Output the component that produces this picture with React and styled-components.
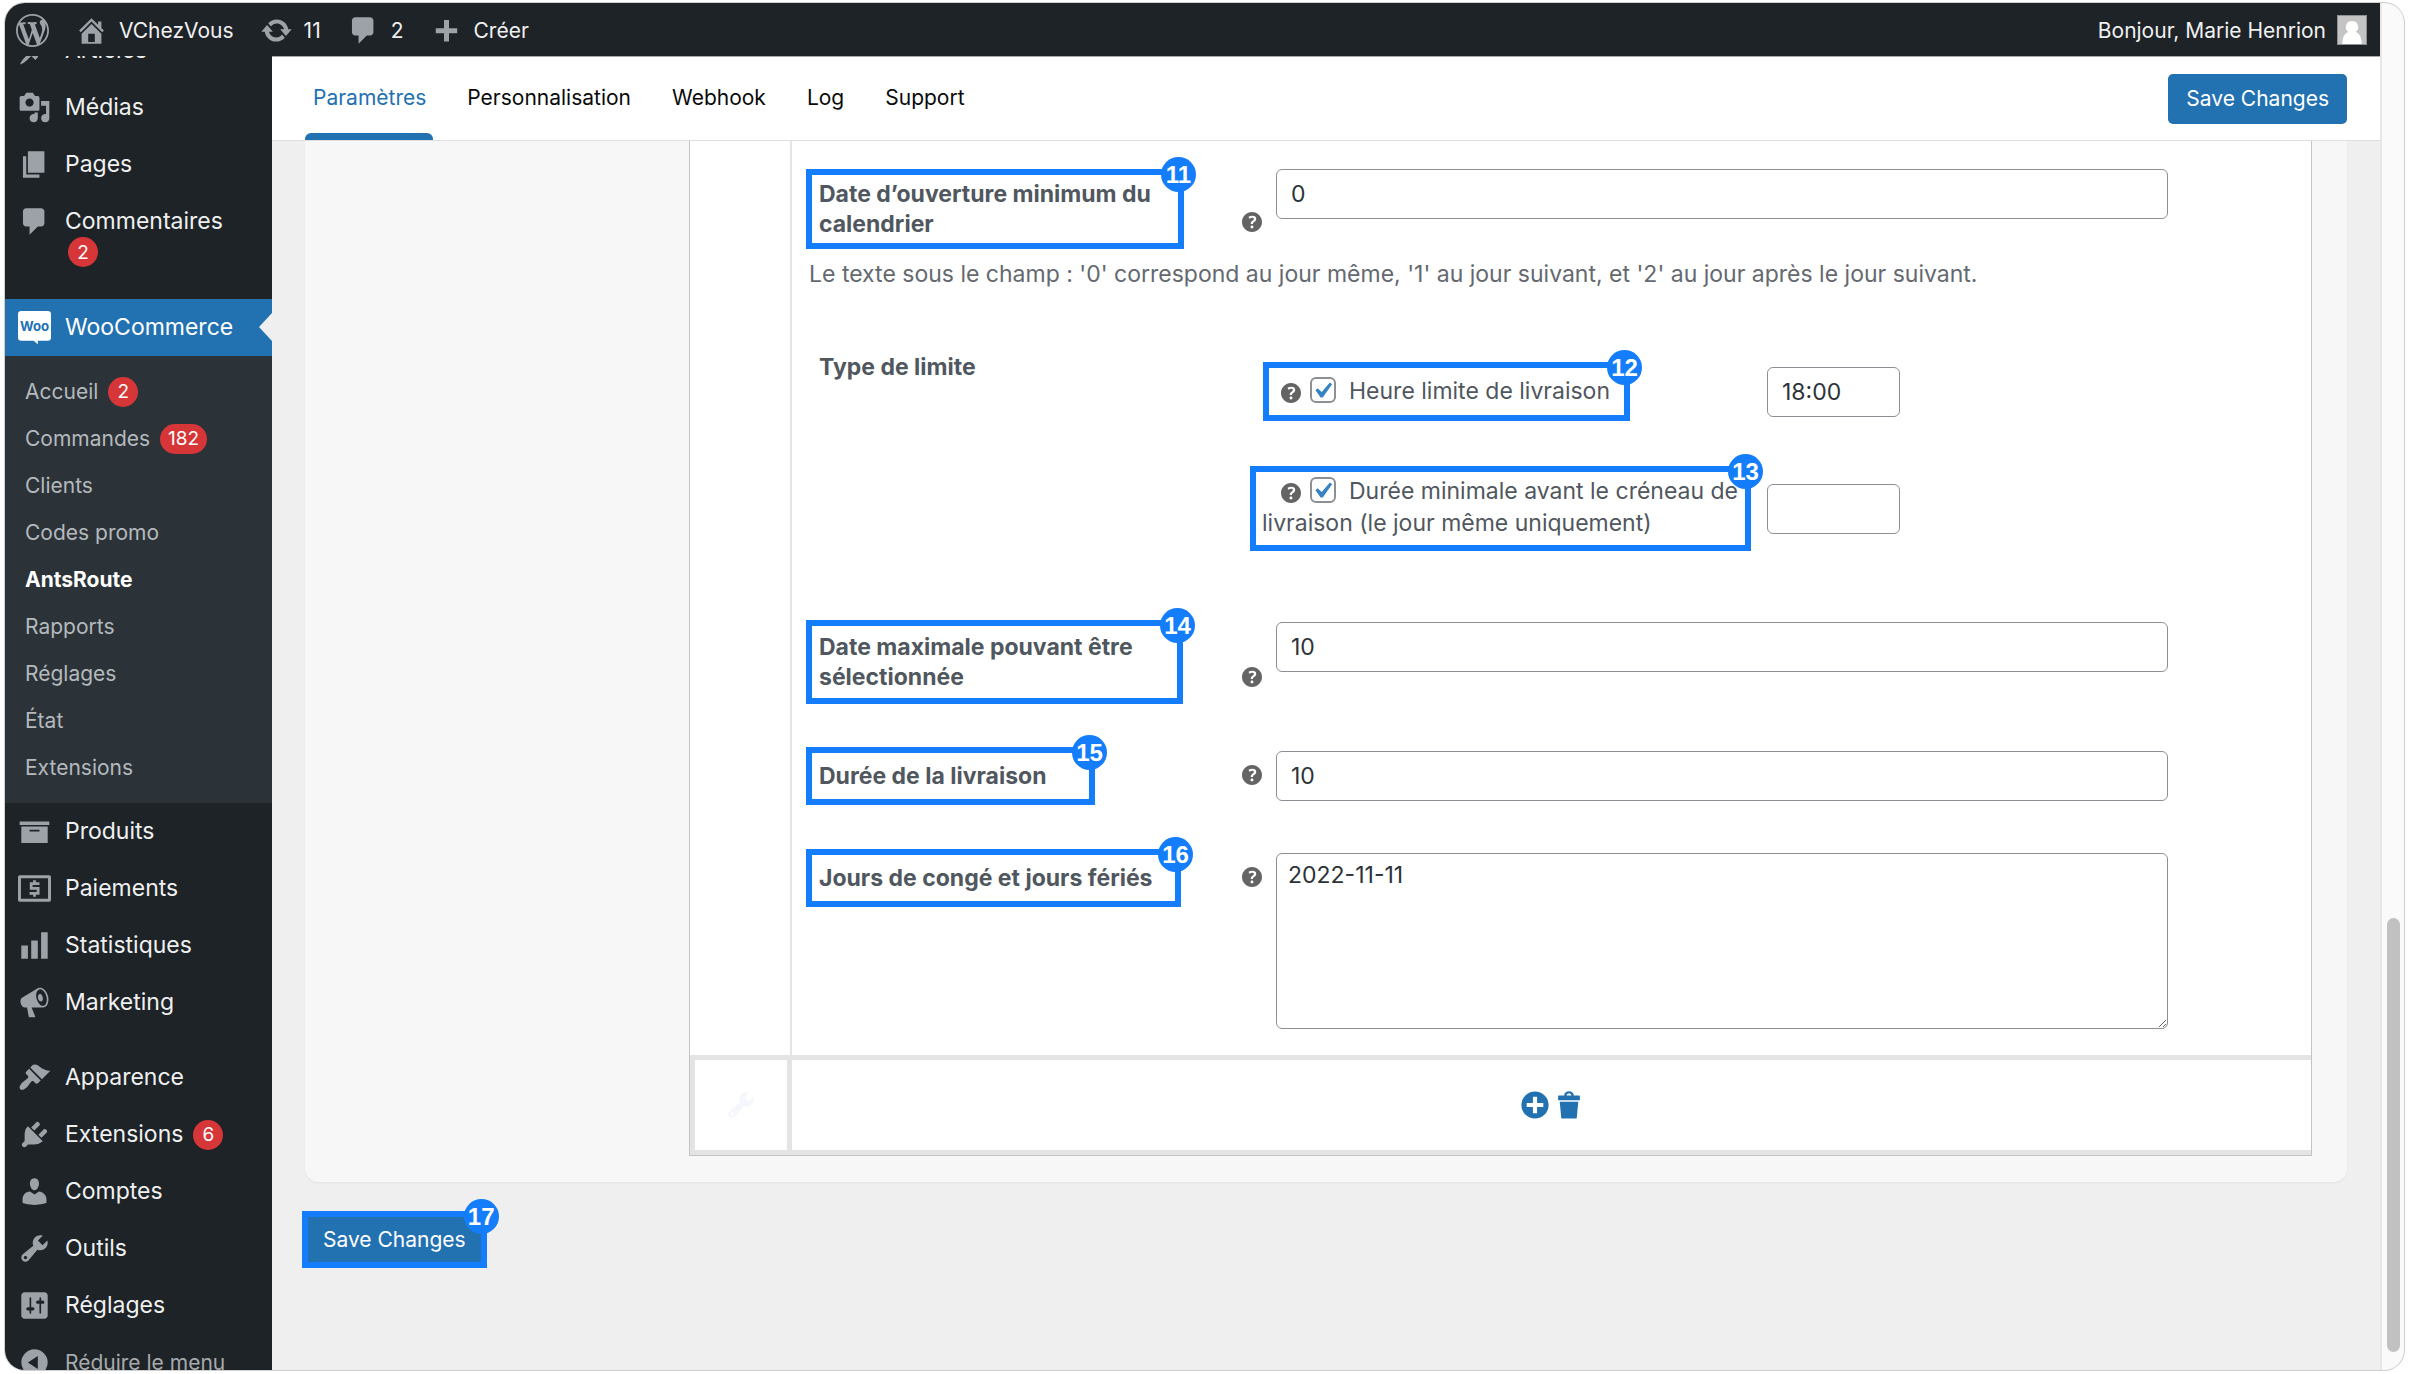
import React from "react";
import styled, { createGlobalStyle, css } from "styled-components";

const color = {
  bar: "#1d2327",
  sub: "#2c3338",
  blue: "#2271b1",
  mark: "#147dfb",
  red: "#d63638",
  icon: "#9ca2a7",
  line: "#e4e4e4",
  border: "#8c8f94",
  page: "#efeff0",
  text: "#50575e",
};

const GlobalStyle = createGlobalStyle`
  *, *::before, *::after { box-sizing: border-box; }
  body {
    margin: 0;
    background: #fff;
    font-family: Inter, "Liberation Sans", sans-serif;
    font-size: 21px;
    color: ${color.text};
  }
  button, input, textarea { font-family: inherit; }
  a { color: inherit; text-decoration: none; }
  ul { margin: 0; padding: 0; list-style: none; }
`;

/* ---------- icons ---------- */

const paths = {
  wordpress:
    "M20 10c0-5.51-4.49-10-10-10C4.48 0 0 4.49 0 10c0 5.52 4.48 10 10 10 5.51 0 10-4.48 10-10zM7.78 15.37L4.37 6.22c.55-.02 1.17-.08 1.17-.08.5-.06.44-1.13-.06-1.11 0 0-1.45.11-2.37.11-.18 0-.37 0-.58-.01C4.12 2.69 6.87 1.11 10 1.11c2.33 0 4.45.87 6.05 2.34-.68-.11-1.65.39-1.65 1.58 0 .74.45 1.36.9 2.1.35.61.55 1.36.55 2.46 0 1.49-1.4 5-1.4 5l-3.03-8.37c.54-.02.82-.17.82-.17.5-.05.44-1.25-.06-1.22 0 0-1.44.12-2.38.12-.87 0-2.33-.12-2.33-.12-.5-.03-.56 1.2-.06 1.22l.92.08 1.26 3.41zM17.41 10c.24-.64.74-1.87.43-4.25.7 1.29 1.05 2.71 1.05 4.25 0 3.29-1.73 6.24-4.4 7.78.97-2.59 1.94-5.2 2.92-7.78zM6.1 18.09C3.12 16.65 1.11 13.53 1.11 10c0-1.3.23-2.48.72-3.59C3.25 10.3 4.67 14.2 6.1 18.09zm4.03-6.63l2.58 6.98c-.86.29-1.76.45-2.71.45-.79 0-1.57-.11-2.29-.33.81-2.38 1.62-4.74 2.42-7.1z",
  home: "M16 8.5l1.53 1.53-1.06 1.06L10 4.6l-6.47 6.49-1.06-1.06L10 2.5l4 4v-2h2v4zm-6-2.46l6 5.99V18H4v-5.97zM12 17v-5H8v5h4z",
  update:
    "M10.2 3.28c3.53 0 6.43 2.61 6.92 6h2.08l-3.5 4-3.5-4h2.32c-.45-1.97-2.21-3.45-4.32-3.45-1.45 0-2.73.71-3.54 1.78L4.95 5.66C6.23 4.2 8.11 3.28 10.2 3.28zm-.4 13.44c-3.52 0-6.43-2.61-6.92-6H.8l3.5-4c1.17 1.33 2.33 2.67 3.5 4H5.48c.45 1.97 2.21 3.45 4.32 3.45 1.45 0 2.73-.71 3.54-1.78l1.71 1.95c-1.28 1.46-3.15 2.38-5.25 2.38z",
  comments:
    "M5 2h9c1.1 0 2 .9 2 2v7c0 1.1-.9 2-2 2h-2l-5 5v-5H5c-1.1 0-2-.9-2-2V4c0-1.1.9-2 2-2z",
  plus: "M16.5 8.7v2.9h-5v5h-3v-5h-5V8.7h5v-5h3v5z",
  post: "M10.44 3.02l1.82-1.82 6.36 6.35-1.83 1.82c-1.05-.68-2.48-.57-3.41.36l-.75.75c-.92.93-1.04 2.35-.35 3.41l-1.83 1.82-2.41-2.41-2.8 2.79c-.42.42-3.38 2.71-3.8 2.29s1.86-3.39 2.28-3.81l2.79-2.79L4.1 9.36l1.83-1.82c1.05.69 2.48.57 3.4-.36l.75-.75c.93-.92 1.05-2.35.36-3.41z",
  media:
    "M13 11V4c0-.55-.45-1-1-1h-1.67L9 1H5L3.67 3H2c-.55 0-1 .45-1 1v7c0 .55.45 1 1 1h10c.55 0 1-.45 1-1zM7 4.5c1.38 0 2.5 1.12 2.5 2.5S8.38 9.5 7 9.5 4.5 8.38 4.5 7 5.62 4.5 7 4.5zM14 6h5v10.5c0 1.38-1.12 2.5-2.5 2.5S14 17.88 14 16.5s1.12-2.5 2.5-2.5c.17 0 .34.02.5.05V9h-3V6zm-4 8.05V13h2v3.5c0 1.38-1.12 2.5-2.5 2.5S7 17.88 7 16.5 8.12 14 9.5 14c.17 0 .34.02.5.05z",
  pages: "M6 15V2h10v13H6zm-1 1h8v2H3V5h2v11z",
  archive: "M19 4v2H1V4h18zM2 7h16v10H2V7zm11 3V9H7v1h6z",
  chart: "M18 18V2h-4v16h4zm-6 0V7H8v11h4zm-6 0v-8H2v8h4z",
  megaphone:
    "M18.15 5.94c.46 1.62.38 3.22-.02 4.48-.42 1.28-1.26 2.18-2.3 2.48-.16.06-.26.06-.4.06-.06.02-.12.02-.18.02-.06.02-.14.02-.22.02h-6.8l2.22 5.5c.02.14-.06.26-.14.34-.08.1-.24.16-.34.16H6.95c-.1 0-.26-.06-.34-.16-.08-.08-.16-.2-.14-.34l-1-5.5H4.25l-.02-.02c-.5.06-1.08-.18-1.54-.62s-.88-1.08-1.06-1.88c-.24-.8-.2-1.56-.02-2.2.18-.62.58-1.08 1.06-1.3l.02-.02 9-5.4c.1-.06.18-.1.24-.16.06-.04.14-.08.24-.12.16-.08.28-.12.5-.18 1.04-.3 2.24.1 3.22.98s1.84 2.24 2.26 3.86zm-2.58 5.98h-.02c.4-.1.74-.34 1.04-.7.58-.7.86-1.76.86-3.04 0-.64-.1-1.3-.28-1.98-.34-1.36-1.02-2.5-1.78-3.24s-1.68-1.1-2.46-.88c-.82.22-1.4.96-1.7 2-.32 1.04-.28 2.36.06 3.72.38 1.36 1 2.5 1.8 3.24.78.74 1.62 1.1 2.48.88zm-2.54-7.08c.22-.04.42-.02.62.04.38.16.76.48 1.02 1s.42 1.2.42 1.78c0 .3-.04.56-.12.8-.18.48-.44.84-.86.94-.34.1-.8-.06-1.14-.4s-.64-.86-.78-1.5c-.18-.62-.12-1.24.02-1.72s.48-.84.82-.94z",
  appearance:
    "M14.48 11.06L7.41 3.99l1.5-1.5c.5-.56 2.3-.47 3.51.32 1.21.8 1.43 1.28 2.91 2.1 1.18.64 2.45 1.26 4.45.85zm-.71.71L6.7 4.7 4.93 6.47c-.39.39-.39 1.02 0 1.41l1.06 1.06c.39.39.39 1.03 0 1.42-.6.6-1.43 1.11-2.21 1.69-.35.26-.7.53-1.01.84C1.43 14.23.4 16.08 1.4 17.07c.99 1 2.84-.03 4.18-1.36.31-.31.58-.66.85-1.02.57-.78 1.08-1.61 1.69-2.21.39-.39 1.02-.39 1.41 0l1.06 1.06c.39.39 1.02.39 1.41 0z",
  plugins:
    "M13.11 4.36L9.87 7.6 8 5.73l3.24-3.24c.35-.34 1.05-.2 1.56.32.52.51.66 1.21.31 1.55zm-8 1.77l.91-1.12 9.01 9.01-1.19.84c-.71.71-2.63 1.16-3.82 1.16H6.14L4.9 17.26c-.59.59-1.54.59-2.12 0-.59-.58-.59-1.53 0-2.12l1.24-1.24v-3.88c0-1.13.4-3.19 1.09-3.89zm7.26 3.97l3.24-3.24c.34-.35 1.04-.21 1.55.31.52.51.66 1.21.31 1.55l-3.24 3.25z",
  users:
    "M10 9.25c-2.27 0-2.73-3.44-2.73-3.44C7 4.02 7.82 2 9.97 2c2.16 0 2.98 2.02 2.71 3.81 0 0-.41 3.44-2.68 3.44zm0 2.57L12.72 10c2.39 0 4.52 2.33 4.52 4.53v2.49s-3.65 1.13-7.24 1.13c-3.65 0-7.24-1.13-7.24-1.13v-2.49c0-2.25 1.94-4.48 4.47-4.48z",
  tools:
    "M16.68 9.77c-1.34 1.34-3.3 1.67-4.95.99l-5.41 6.52c-.99.99-2.59.99-3.58 0s-.99-2.59 0-3.57l6.52-5.42c-.68-1.65-.35-3.61.99-4.95 1.28-1.28 3.12-1.62 4.72-1.06l-2.89 2.89 2.82 2.82 2.86-2.87c.53 1.58.18 3.39-1.08 4.65zM3.81 16.21c.4.39 1.04.39 1.43 0 .4-.4.4-1.04 0-1.43-.39-.4-1.03-.4-1.43 0-.39.39-.39 1.03 0 1.43z",
  settings:
    "M18 16V4c0-1.1-.9-2-2-2H4c-1.1 0-2 .9-2 2v12c0 1.1.9 2 2 2h12c1.1 0 2-.9 2-2zM8 11h1c.55 0 1 .45 1 1s-.45 1-1 1H8v1.5c0 .28-.22.5-.5.5s-.5-.22-.5-.5V13H6c-.55 0-1-.45-1-1s.45-1 1-1h1V5.5c0-.28.22-.5.5-.5s.5.22.5.5V11zm5-2h-1c-.55 0-1-.45-1-1s.45-1 1-1h1V5.5c0-.28.22-.5.5-.5s.5.22.5.5V7h1c.55 0 1 .45 1 1s-.45 1-1 1h-1v5.5c0 .28-.22.5-.5.5s-.5-.22-.5-.5V9z",
  collapse: "M10 2a8 8 0 1 0 0 16 8 8 0 0 0 0-16zm2 4v8l-6-4z",
  help: "M17 10c0-3.87-3.14-7-7-7-3.87 0-7 3.13-7 7s3.13 7 7 7c3.86 0 7-3.13 7-7zm-6.3 1.48H9.14v-.43c0-.38.08-.7.24-.98s.46-.57.88-.89c.41-.29.68-.53.81-.71.14-.18.2-.39.2-.62 0-.25-.09-.44-.28-.58-.19-.13-.45-.19-.79-.19-.58 0-1.25.19-2 .57l-.64-1.28c.87-.49 1.8-.74 2.77-.74.81 0 1.45.2 1.92.58.48.39.71.91.71 1.55 0 .43-.09.8-.29 1.11-.19.32-.57.67-1.11 1.06-.38.28-.61.49-.71.63-.1.15-.15.34-.15.57v.35zm-1.47 2.74c-.18-.17-.27-.42-.27-.73 0-.33.08-.58.26-.75s.43-.25.77-.25c.32 0 .57.09.75.26s.27.42.27.74c0 .3-.09.55-.27.72-.18.18-.43.27-.75.27-.33 0-.58-.09-.76-.26z",
  add: "M10 1.5a8.5 8.5 0 1 0 0 17 8.5 8.5 0 0 0 0-17zM8.7 4.8h2.6v3.9h3.9v2.6h-3.9v3.9H8.7v-3.9H4.8V8.7h3.9z",
  trash:
    "M7 4c0-1.4 1.2-2.6 3-2.6S13 2.6 13 4h3.2c.4 0 .6.3.6.7V7H3.2V4.7c0-.4.2-.7.6-.7zm1.5 0h3c-.1-.8-.7-1.2-1.500-1.200S8.600 3.200 8.500 4zM4.200 8h11.600l-1 10.500H5.200z",
};

const Svg = styled.svg`
  display: block;
  flex: none;
  width: ${(p) => p.$size}px;
  height: ${(p) => p.$size}px;
  fill: currentColor;
`;

const Icon = ({ name, size = 33 }) => (
  <Svg $size={size} viewBox="0 0 20 20" aria-hidden="true">
    <path fillRule="evenodd" d={paths[name]} />
  </Svg>
);

const MoneyIcon = () => (
  <Svg $size={33} viewBox="0 0 20 20" aria-hidden="true">
    <path
      fillRule="evenodd"
      d="M1 2h18a1 1 0 0 1 1 1v14a1 1 0 0 1-1 1H1a1 1 0 0 1-1-1V3a1 1 0 0 1 1-1zm.8 1.800v12.400h16.400V3.800z"
    />
    <path
      fill="none"
      stroke="currentColor"
      strokeWidth="1.7"
      d="M13 7H8v2.900h4.200V13H7M10 5v2M10 13v2"
    />
  </Svg>
);

const WooText = styled.text`
  font: 700 8px Inter, sans-serif;
  fill: ${color.blue};
`;

const WooIcon = () => (
  <Svg $size={33} viewBox="0 0 20 20" aria-hidden="true">
    <path
      fill="#fff"
      d="M2 0h16a2 2 0 0 1 2 2v14a2 2 0 0 1-2 2h-6v2.200L9.500 18H2a2 2 0 0 1-2-2V2a2 2 0 0 1 2-2z"
    />
    <WooText x="10" y="12" textAnchor="middle">
      Woo
    </WooText>
  </Svg>
);

/* ---------- frame ---------- */

const Frame = styled.div`
  display: flex;
  height: calc(100vh - 7px);
  margin: 3px 5px 4px;
  overflow: hidden;
  border-radius: 20px;
  background: #fafafa;
  box-shadow: 0 0 0 1px #cfcfcf;
`;

const Screen = styled.div`
  display: flex;
  flex: 1;
  flex-direction: column;
  min-width: 0;
`;

const ScrollTrack = styled.div`
  flex: none;
  width: 24px;
  padding: 915px 4px 18px;
  border-left: 2px solid #e8e8e8;
`;

const ScrollThumb = styled.div`
  width: 13px;
  height: 100%;
  margin: 0 auto;
  border-radius: 7px;
  background: #c1c1c1;
`;

const Body = styled.div`
  display: flex;
  flex: 1;
  min-height: 0;
`;

/* ---------- admin bar ---------- */

const AdminBar = styled.header`
  display: flex;
  flex: none;
  align-items: center;
  justify-content: space-between;
  height: 53px;
  padding: 1px 13px 0 11px;
  background: ${color.bar};
  color: #f0f0f1;
`;

const BarGroup = styled.div`
  display: flex;
  align-items: center;
  gap: 26px;
`;

const BarLink = styled.a`
  display: flex;
  align-items: center;
  gap: 11px;
  svg { color: ${color.icon}; }
`;

const Avatar = styled.span`
  display: block;
  width: 30px;
  height: 30px;
  border: 1px solid #8c8f94;
  background: #c4c4c4;
`;

/* ---------- side menu ---------- */

const SideMenu = styled.nav`
  flex: none;
  width: 267px;
  overflow: hidden;
  background: ${color.bar};
  color: #f0f0f1;
  font-size: 23px;
  line-height: 29px;
`;

/* The menu is scrolled down by part of its first entry. */
const MenuList = styled.ul`
  margin-top: -34px;
`;

const MenuGap = styled.li`
  height: 18px;
`;

const MenuLink = styled.a`
  position: relative;
  display: flex;
  align-items: flex-start;
  gap: 14px;
  padding: 14px 0 14px 13px;
  white-space: nowrap;
  svg { margin: -2px 0; color: ${color.icon}; }
  ${(p) => p.$muted && "color: #a7aaad; font-size: 21px;"}
  ${(p) =>
    p.$active &&
    css`
      background: ${color.blue};
      color: #fff;
      &::after {
        content: "";
        position: absolute;
        right: 0;
        top: 14px;
        border: 14px solid transparent;
        border-right: 13px solid ${color.page};
        border-left: 0;
      }
    `}
`;

const MenuText = styled.span`
  display: flex;
  flex-direction: ${(p) => (p.$stacked ? "column" : "row")};
  align-items: ${(p) => (p.$stacked ? "flex-start" : "center")};
  column-gap: 10px;
`;

const Count = styled.span`
  display: inline-flex;
  align-items: center;
  justify-content: center;
  min-width: 30px;
  height: 30px;
  margin: ${(p) => (p.$stacked ? "1px 3px 0" : "-1px 0")};
  padding: 0 8px;
  border-radius: 15px;
  background: ${color.red};
  color: #fff;
  font-size: 19px;
`;

const SubMenu = styled.ul`
  padding: 12px 0;
  background: ${color.sub};
  color: #b4b9be;
  font-size: 21px;
`;

const SubLink = styled.a`
  display: flex;
  align-items: center;
  gap: 10px;
  height: 47px;
  padding-left: 20px;
  ${(p) => p.$active && "color: #fff; font-weight: 700;"}
`;

const MenuItem = ({ icon, label, count, stacked, muted, active, children }) => (
  <li>
    <MenuLink href="#" $muted={muted} $active={active}>
      {typeof icon === "string" ? <Icon name={icon} /> : icon}
      <MenuText $stacked={stacked}>
        {label}
        {count && <Count $stacked={stacked}>{count}</Count>}
      </MenuText>
    </MenuLink>
    {children}
  </li>
);

const subItems = [
  ["Accueil", "2"],
  ["Commandes", "182"],
  ["Clients"],
  ["Codes promo"],
  ["AntsRoute"],
  ["Rapports"],
  ["Réglages"],
  ["État"],
  ["Extensions"],
];

/* ---------- main column ---------- */

const Main = styled.main`
  flex: 1;
  min-width: 0;
  overflow: hidden;
  background: ${color.page};
`;

const TopTabs = styled.div`
  display: flex;
  align-items: center;
  justify-content: space-between;
  height: 85px;
  padding: 0 33px;
  border-top: 1px solid #a7a9ab;
  border-bottom: 1px solid #dcdfe2;
  background: #fff;
`;

const TabList = styled.nav`
  display: flex;
  align-self: stretch;
  gap: 26px;
`;

const Tab = styled.a`
  display: flex;
  align-items: center;
  padding: 4px 7px 0 8px;
  border-bottom: 7px solid transparent;
  color: #0a0a0a;
  ${(p) =>
    p.$active &&
    css`
      position: relative;
      color: ${color.blue};
      &::after {
        content: "";
        position: absolute;
        inset: auto 0 -7px;
        height: 7px;
        border-radius: 6px 6px 0 0;
        background: ${color.blue};
      }
    `}
`;

const Button = styled.button`
  height: ${(p) => (p.$flat ? 45 : 50)}px;
  padding: 0 ${(p) => (p.$flat ? 15 : 18)}px;
  border: 0;
  border-radius: ${(p) => (p.$flat ? 0 : 5)}px;
  background: ${color.blue};
  color: #fff;
  font-size: 21px;
  white-space: nowrap;
`;

const Content = styled.div`
  padding: 0 33px;
`;

const Card = styled.section`
  padding: 0 35px 26px 384px;
  border-radius: 0 0 14px 14px;
  background: #f7f7f7;
  box-shadow: 0 2px 2px rgba(0, 0, 40, 0.03);
`;

const Sheet = styled.div`
  display: grid;
  grid-template-columns: 102px 1fr;
  border: 1px solid #c3c4c7;
  border-top: 0;
  background: #fff;
`;

const Gutter = styled.div`
  border-right: 2px solid ${color.line};
`;

const Form = styled.form`
  padding: 28px 143px 26px 14px;
`;

const FootCell = styled.div`
  display: flex;
  align-items: center;
  justify-content: center;
  gap: 2px;
  height: 100px;
  border: solid ${color.line};
  border-width: 5px ${(p) => (p.$first ? "5px 5px 5px" : "0 5px 0")};
  color: ${(p) => (p.$first ? "#f5f7fc" : color.blue)};
`;

const IconButton = styled.button`
  padding: 0;
  border: 0;
  background: none;
  color: inherit;
`;

const SaveArea = styled.div`
  margin: 29px -3px;
`;

/* ---------- numbered marks ---------- */

const Mark = styled.div`
  position: relative;
  width: ${(p) => (p.$width ? `${p.$width}px` : "fit-content")};
  margin-left: ${(p) => p.$indent ?? 0}px;
  padding: ${(p) => p.$pad ?? "0"};
  border: 6px solid ${color.mark};
`;

const MarkNumber = styled.span`
  position: absolute;
  top: -18px;
  right: -18px;
  width: 35px;
  height: 35px;
  border-radius: 50%;
  background: ${color.mark};
  color: #fff;
  font: bold 24px/35px "Liberation Sans", Arial, sans-serif;
  text-align: center;
  text-indent: 0;
`;

/* ---------- fields ---------- */

const Row = styled.div`
  display: grid;
  grid-template-columns: 456px 1fr;
  column-gap: 14px;
  align-items: ${(p) => p.$align ?? "start"};
  margin-top: ${(p) => p.$space ?? 0}px;
  > input, > textarea { margin-top: ${(p) => p.$drop ?? 0}px; }
`;

const LabelCell = styled.div`
  display: flex;
  align-items: ${(p) => (p.$low ? "flex-end" : "center")};
  justify-content: space-between;
  > svg { margin-bottom: ${(p) => (p.$low ? 17 : 2)}px; }
`;

const labelLook = css`
  font-size: 23px;
  font-weight: 700;
  line-height: 30px;
`;

const Label = styled.label`
  ${labelLook}
  display: block;
`;

const GroupLabel = styled.div`
  ${labelLook}
  padding-left: 13px;
`;

const HelpSvg = styled.svg`
  flex: none;
  width: 20px;
  height: 20px;
  fill: #646464;
`;

const Help = () => (
  <HelpSvg viewBox="3 3 14 14" role="img" aria-label="Aide">
    <path d={paths.help} />
  </HelpSvg>
);

const fieldLook = css`
  display: block;
  width: 100%;
  border: 1px solid ${color.border};
  border-radius: 6px;
  background: #fff;
  color: #2c3338;
  font-size: 23px;
  line-height: 30px;
`;

const TextInput = styled.input`
  ${fieldLook}
  height: 50px;
  padding: 0 14px;
`;

const TextArea = styled.textarea`
  ${fieldLook}
  height: 176px;
  padding: 6px 11px;
  resize: both;
`;

const Note = styled.p`
  margin: 10px 0 0 3px;
  color: #646970;
  font-size: 23px;
  line-height: 30px;
`;

const LimitGroup = styled.div`
  display: grid;
  grid-template-columns: 444px 1fr;
  margin-top: 63px;
`;

const LimitList = styled.div`
  display: grid;
  row-gap: 45px;
  padding-top: 10px;
`;

const Limit = styled.div`
  display: grid;
  grid-template-columns: 517px 133px;
  align-items: center;
`;

const CheckLine = styled.div`
  font-size: 23px;
  line-height: 32px;
  text-indent: ${(p) => p.$indent ?? 0}px;
  svg { margin-right: 9px; vertical-align: -4px; }
`;

const Checkbox = styled.input`
  appearance: none;
  width: 26px;
  height: 26px;
  margin: 0 13px 0 0;
  border: 2px solid ${color.border};
  border-radius: 6px;
  background: #fff;
  vertical-align: -4px;
  &:checked {
    background: #fff
      url("data:image/svg+xml,%3Csvg xmlns='http://www.w3.org/2000/svg' viewBox='3 2 15 15'%3E%3Cpath fill='%233582c4' d='M14.83 4.89l1.34.94-5.81 8.38H9.020L5.780 9.670l1.340-1.250 2.570 2.400z'/%3E%3C/svg%3E")
      center / 24px no-repeat;
  }
`;

const Field = ({ id, mark, label, width, pad, low, align, space, drop, children }) => (
  <Row $align={align} $space={space} $drop={drop}>
    <LabelCell $low={low}>
      <Mark $width={width} $pad={pad}>
        <Label htmlFor={id}>{label}</Label>
        <MarkNumber>{mark}</MarkNumber>
      </Mark>
      <Help />
    </LabelCell>
    {children}
  </Row>
);

export default function App() {
  return (
    <>
      <GlobalStyle />
      <Frame>
        <Screen>
          <AdminBar>
            <BarGroup>
              <BarLink href="#" aria-label="WordPress">
                <Icon name="wordpress" />
              </BarLink>
              <BarLink href="#">
                <Icon name="home" />
                VChezVous
              </BarLink>
              <BarLink href="#">
                <Icon name="update" />
                11
              </BarLink>
              <BarLink href="#">
                <Icon name="comments" />2
              </BarLink>
              <BarLink href="#">
                <Icon name="plus" />
                Créer
              </BarLink>
            </BarGroup>
            <BarLink href="#">
              Bonjour, Marie Henrion
              <Avatar>
                <Svg $size={28} viewBox="0 0 28 28" aria-hidden="true">
                  <path
                    fill="#fff"
                    d="M14 5a6 6 0 0 1 3.500 11c3.800 1.200 6.200 4.800 6.200 12H4.300c0-7.200 2.400-10.800 6.200-12A6 6 0 0 1 14 5z"
                  />
                </Svg>
              </Avatar>
            </BarLink>
          </AdminBar>

          <Body>
            <SideMenu aria-label="Menu principal">
              <MenuList>
                <MenuItem icon="post" label="Articles" />
                <MenuItem icon="media" label="Médias" />
                <MenuItem icon="pages" label="Pages" />
                <MenuItem icon="comments" label="Commentaires" count="2" stacked />
                <MenuGap />
                <MenuItem icon={<WooIcon />} label="WooCommerce" active>
                  <SubMenu>
                    {subItems.map(([name, count]) => (
                      <li key={name}>
                        <SubLink href="#" $active={name === "AntsRoute"}>
                          {name}
                          {count && <Count>{count}</Count>}
                        </SubLink>
                      </li>
                    ))}
                  </SubMenu>
                </MenuItem>
                <MenuItem icon="archive" label="Produits" />
                <MenuItem icon={<MoneyIcon />} label="Paiements" />
                <MenuItem icon="chart" label="Statistiques" />
                <MenuItem icon="megaphone" label="Marketing" />
                <MenuGap />
                <MenuItem icon="appearance" label="Apparence" />
                <MenuItem icon="plugins" label="Extensions" count="6" />
                <MenuItem icon="users" label="Comptes" />
                <MenuItem icon="tools" label="Outils" />
                <MenuItem icon="settings" label="Réglages" />
                <MenuItem icon="collapse" label="Réduire le menu" muted />
              </MenuList>
            </SideMenu>

            <Main>
              <TopTabs>
                <TabList aria-label="Onglets">
                  <Tab href="#" $active>
                    Paramètres
                  </Tab>
                  <Tab href="#">Personnalisation</Tab>
                  <Tab href="#">Webhook</Tab>
                  <Tab href="#">Log</Tab>
                  <Tab href="#">Support</Tab>
                </TabList>
                <Button type="button">Save Changes</Button>
              </TopTabs>

              <Content>
                <Card>
                  <Sheet>
                    <Gutter />
                    <Form>
                      <Field
                        id="opening"
                        mark="11"
                        label="Date d’ouverture minimum du calendrier"
                        width={378}
                        pad="4px 7px"
                        low
                      >
                        <TextInput id="opening" defaultValue="0" />
                      </Field>
                      <Note>
                        Le texte sous le champ : '0' correspond au jour même, '1' au jour
                        suivant, et '2' au jour après le jour suivant.
                      </Note>

                      <LimitGroup role="group" aria-labelledby="limit-title">
                        <GroupLabel id="limit-title">Type de limite</GroupLabel>
                        <LimitList>
                          <Limit>
                            <Mark $width={367} $indent={13} $pad="7px 0 8px 12px">
                              <CheckLine>
                                <Help />
                                <Checkbox type="checkbox" id="hour" defaultChecked />
                                <label htmlFor="hour">Heure limite de livraison</label>
                              </CheckLine>
                              <MarkNumber>12</MarkNumber>
                            </Mark>
                            <TextInput aria-label="Heure limite" defaultValue="18:00" />
                          </Limit>
                          <Limit>
                            <Mark $width={501} $pad="3px 0 6px 6px">
                              <CheckLine $indent={19}>
                                <Help />
                                <Checkbox type="checkbox" id="delay" defaultChecked />
                                <label htmlFor="delay">
                                  Durée minimale avant le créneau de livraison (le jour
                                  même uniquement)
                                </label>
                              </CheckLine>
                              <MarkNumber>13</MarkNumber>
                            </Mark>
                            <TextInput aria-label="Durée minimale" defaultValue="" />
                          </Limit>
                        </LimitList>
                      </LimitGroup>

                      <Field
                        id="max-date"
                        mark="14"
                        label="Date maximale pouvant être sélectionnée"
                        width={377}
                        pad="6px 7px"
                        space={69}
                        drop={2}
                        low
                      >
                        <TextInput id="max-date" defaultValue="10" />
                      </Field>
                      <Field
                        id="duration"
                        mark="15"
                        label="Durée de la livraison"
                        width={289}
                        pad="8px 7px"
                        space={43}
                        align="center"
                      >
                        <TextInput id="duration" defaultValue="10" />
                      </Field>
                      <Field
                        id="holidays"
                        mark="16"
                        label="Jours de congé et jours fériés"
                        width={375}
                        pad="8px 7px"
                        space={44}
                        drop={4}
                      >
                        <TextArea id="holidays" defaultValue="2022-11-11" />
                      </Field>
                    </Form>
                    <FootCell $first>
                      <Icon name="tools" size={32} />
                    </FootCell>
                    <FootCell>
                      <IconButton type="button" aria-label="Ajouter">
                        <Icon name="add" size={32} />
                      </IconButton>
                      <IconButton type="button" aria-label="Supprimer">
                        <Icon name="trash" size={32} />
                      </IconButton>
                    </FootCell>
                  </Sheet>
                </Card>

                <SaveArea>
                  <Mark>
                    <Button type="submit" $flat>
                      Save Changes
                    </Button>
                    <MarkNumber>17</MarkNumber>
                  </Mark>
                </SaveArea>
              </Content>
            </Main>
          </Body>
        </Screen>
        <ScrollTrack aria-hidden="true">
          <ScrollThumb />
        </ScrollTrack>
      </Frame>
    </>
  );
}
